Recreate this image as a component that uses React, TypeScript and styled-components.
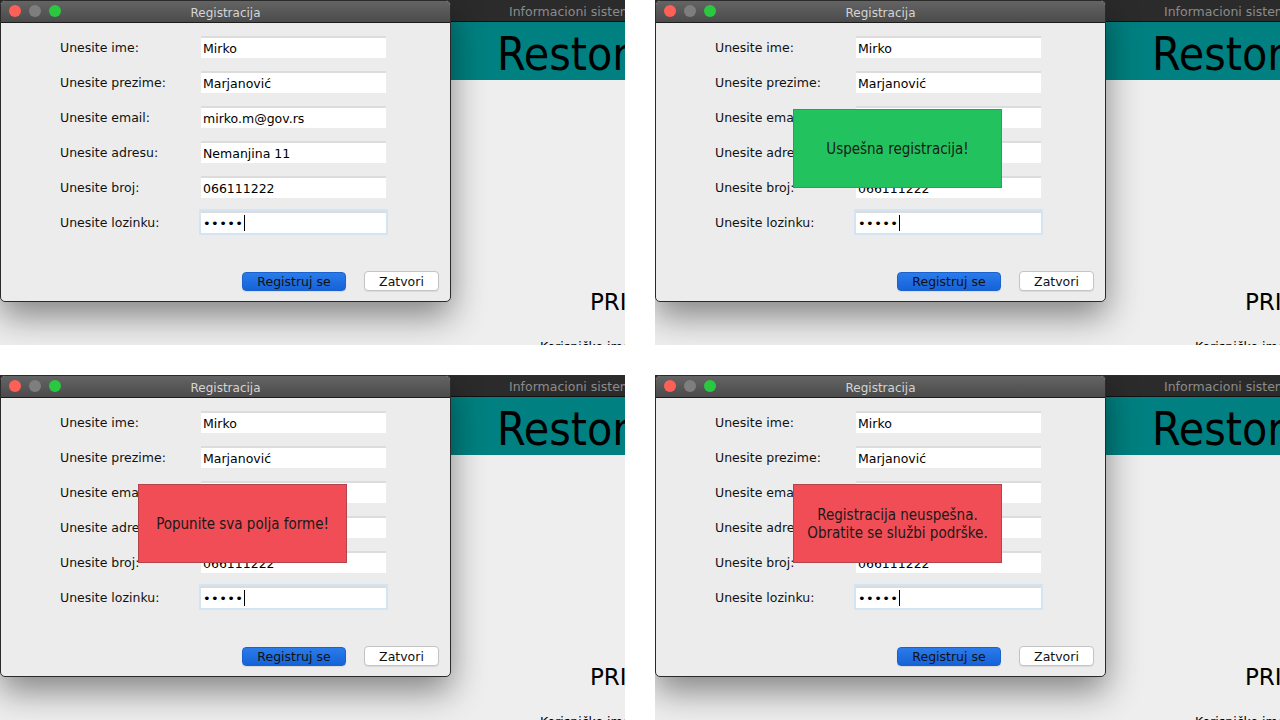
import React from 'react';
import styled, { createGlobalStyle } from 'styled-components';

const GlobalStyle = createGlobalStyle`
  html, body {
    margin: 0;
    padding: 0;
    background: #ffffff;
  }
  body {
    font-family: "DejaVu Sans", "Liberation Sans", sans-serif;
  }
`;

type Tone = 'success' | 'error';

const Page = styled.div`
  display: grid;
  grid-template-columns: 625px 625px;
  grid-template-rows: 345px 345px;
  column-gap: 30px;
  row-gap: 30px;
  width: 1280px;
  height: 720px;
`;

const Scene = styled.div`
  position: relative;
  overflow: hidden;
  background: #eeeeee;
`;

const MainWindow = styled.div`
  display: flex;
  flex-direction: column;
  height: 100%;
`;

const MainTitleBar = styled.div`
  flex-shrink: 0;
  height: 22px;
  background: #2b2b2b;
  border-bottom: 1px solid #111;
  box-sizing: border-box;
  display: flex;
  align-items: center;
  padding: 2px 0 0 509px;
  white-space: nowrap;
  overflow: hidden;
`;

const MainTitle = styled.span`
  color: #8c8c8c;
  font-size: 12.5px;
`;

const Banner = styled.div`
  flex-shrink: 0;
  height: 58px;
  background: #008080;
  display: flex;
  align-items: center;
  padding-left: 497px;
  white-space: nowrap;
  overflow: hidden;
`;

const BannerText = styled.span`
  font-family: "DejaVu Sans Condensed", "DejaVu Sans", sans-serif;
  font-stretch: condensed;
  font-size: 46px;
  line-height: 1;
  color: #000;
  margin-top: 5px;
`;

const MainBody = styled.div`
  flex: 1;
  display: flex;
  flex-direction: column;
  align-items: flex-start;
  padding-top: 209px;
  white-space: nowrap;
`;

const LoginHeading = styled.span`
  margin-left: 590px;
  font-size: 23px;
  line-height: 26px;
  color: #000;
`;

const LoginLabel = styled.span`
  margin-left: 540px;
  margin-top: 24px;
  font-size: 12.5px;
  color: #000;
`;

const Dialog = styled.div`
  position: absolute;
  left: 0;
  top: 0;
  width: 451px;
  height: 302px;
  box-sizing: border-box;
  background: #ececec;
  border: 1px solid #2a2a2a;
  border-radius: 5px;
  box-shadow: 0 14px 34px rgba(0, 0, 0, 0.45);
  display: flex;
  flex-direction: column;
  overflow: hidden;
`;

const TitleBar = styled.div`
  position: relative;
  flex-shrink: 0;
  height: 22px;
  box-sizing: border-box;
  background: linear-gradient(#646464, #4b4b4b);
  border-bottom: 1px solid #1c1c1c;
  display: flex;
  align-items: center;
  justify-content: center;
`;

const Lights = styled.div`
  position: absolute;
  left: 8px;
  top: 4px;
  display: flex;
  gap: 8px;
`;

const Light = styled.span<{ $color: string }>`
  width: 12px;
  height: 12px;
  border-radius: 50%;
  background: ${p => p.$color};
`;

const DialogTitle = styled.span`
  color: #d4d4d4;
  font-size: 12px;
  margin-top: 2px;
`;

const Form = styled.div`
  display: grid;
  grid-template-columns: 141px 185px;
  grid-auto-rows: 22px;
  row-gap: 13px;
  padding: 13px 0 0 59px;
`;

const Label = styled.span`
  display: flex;
  align-items: center;
  font-size: 12.5px;
  color: #111;
`;

const Field = styled.div<{ $focused?: boolean }>`
  display: flex;
  align-items: center;
  box-sizing: border-box;
  background: #fff;
  border-top: 2px solid #dcdcdc;
  padding-left: 2px;
  font-size: 12.5px;
  color: #000;
  box-shadow: ${p => (p.$focused ? '0 0 0 2px #d3e5f3' : 'none')};
`;

const Dots = styled.span`
  font-size: 13px;
  letter-spacing: 0.4px;
`;

const Caret = styled.span`
  width: 1px;
  height: 16px;
  background: #000;
  margin-left: 1px;
`;

const ButtonRow = styled.div`
  margin-top: auto;
  display: flex;
  justify-content: flex-end;
  align-items: center;
  gap: 18px;
  padding: 0 11px 10px 0;
`;

const Button = styled.button<{ $primary?: boolean }>`
  font-family: "DejaVu Sans", sans-serif;
  font-size: 12.5px;
  color: #111;
  height: ${p => (p.$primary ? '19px' : '20px')};
  width: ${p => (p.$primary ? '104px' : '75px')};
  padding: 0;
  border-radius: 4px;
  border: 1px solid ${p => (p.$primary ? '#1b62cf' : '#c4c4c4')};
  background: ${p => (p.$primary ? 'linear-gradient(#2a7bea, #1663d8)' : '#fff')};
  box-shadow: 0 1px 1px rgba(0, 0, 0, 0.08);
`;

const Toast = styled.div<{ $tone: Tone }>`
  position: absolute;
  left: 138px;
  top: 109px;
  width: 209px;
  height: 79px;
  box-sizing: border-box;
  display: flex;
  align-items: center;
  justify-content: center;
  text-align: center;
  font-family: "DejaVu Sans Condensed", "DejaVu Sans", sans-serif;
  font-stretch: condensed;
  font-size: 15px;
  line-height: 18px;
  color: #1a1a1a;
  background: ${p => (p.$tone === 'success' ? '#22c35e' : '#f04d56')};
  border: 1px solid ${p => (p.$tone === 'success' ? '#3a9a4e' : '#b3444b')};
`;

const fields = [
  { label: 'Unesite ime:', value: 'Mirko' },
  { label: 'Unesite prezime:', value: 'Marjanović' },
  { label: 'Unesite email:', value: 'mirko.m@gov.rs' },
  { label: 'Unesite adresu:', value: 'Nemanjina 11' },
  { label: 'Unesite broj:', value: '066111222' },
];

type Message = { tone: Tone; lines: string[] } | null;

const scenes: Message[] = [
  null,
  { tone: 'success', lines: ['Uspešna registracija!'] },
  { tone: 'error', lines: ['Popunite sva polja forme!'] },
  { tone: 'error', lines: ['Registracija neuspešna.', 'Obratite se službi podrške.'] },
];

const RegistrationScene: React.FC<{ message: Message }> = ({ message }) => (
  <Scene>
    <MainWindow>
      <MainTitleBar>
        <MainTitle>Informacioni sistem restorana</MainTitle>
      </MainTitleBar>
      <Banner>
        <BannerText>Restorani</BannerText>
      </Banner>
      <MainBody>
        <LoginHeading>PRIJAVA</LoginHeading>
        <LoginLabel>Korisničko ime:</LoginLabel>
      </MainBody>
    </MainWindow>

    <Dialog>
      <TitleBar>
        <Lights>
          <Light $color="#fe5f57" />
          <Light $color="#7e7e7e" />
          <Light $color="#2ac840" />
        </Lights>
        <DialogTitle>Registracija</DialogTitle>
      </TitleBar>
      <Form>
        {fields.map(f => (
          <React.Fragment key={f.label}>
            <Label>{f.label}</Label>
            <Field>{f.value}</Field>
          </React.Fragment>
        ))}
        <Label>Unesite lozinku:</Label>
        <Field $focused>
          <Dots>•••••</Dots>
          <Caret />
        </Field>
      </Form>
      <ButtonRow>
        <Button $primary>Registruj se</Button>
        <Button>Zatvori</Button>
      </ButtonRow>
    </Dialog>

    {message && (
      <Toast $tone={message.tone}>
        <div>
          {message.lines.map(line => (
            <div key={line}>{line}</div>
          ))}
        </div>
      </Toast>
    )}
  </Scene>
);

export default function App() {
  return (
    <>
      <GlobalStyle />
      <Page>
        {scenes.map((m, i) => (
          <RegistrationScene key={i} message={m} />
        ))}
      </Page>
    </>
  );
}
